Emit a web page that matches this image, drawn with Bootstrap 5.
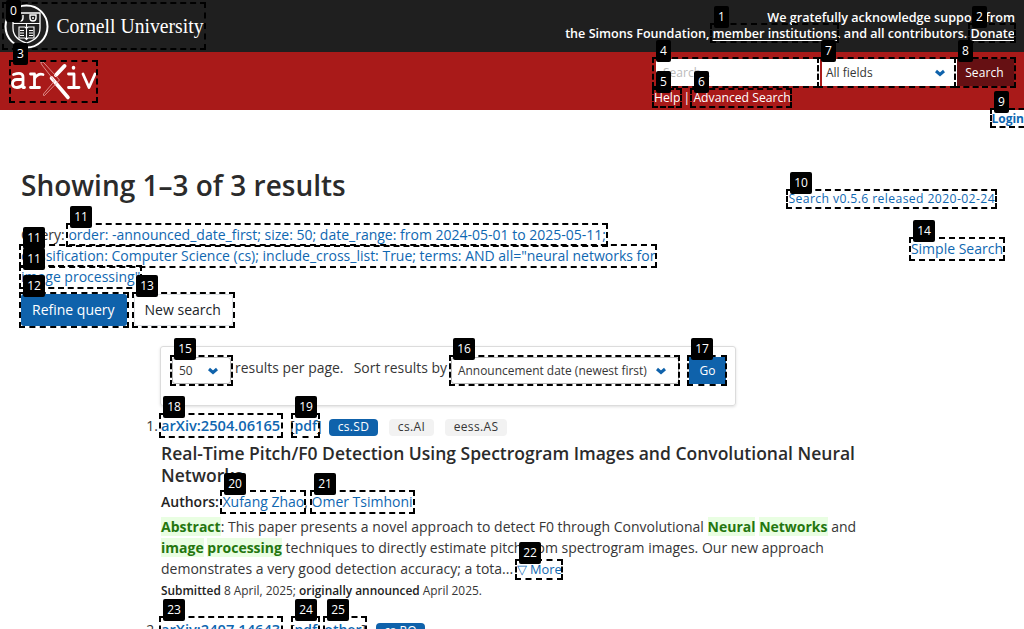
<!DOCTYPE html>
<html lang="en">
<head>
<meta charset="utf-8">
<meta name="viewport" content="width=device-width, initial-scale=1">
<title>Search | arXiv e-print repository</title>
<link href="https://cdn.jsdelivr.net/npm/bootstrap@5.3.0/dist/css/bootstrap.min.css" rel="stylesheet">
<style>
html,body{height:629px;overflow:hidden}
body{font:400 14px/21px "Open Sans",sans-serif;color:#363636;background:#fff;position:relative}
a{color:#0f67b1;text-decoration:none}
.top-bar{height:52px;background:#1f1f1f;color:#fff;font-weight:600;font-size:12.6px;line-height:16px;padding:2px 9px 0 3px}
.top-bar a{color:#fff;text-decoration:underline;text-underline-offset:2px}
.brand-bar{height:58px;background:#a91a19;padding:7px 10px 0 11px;color:#fff}
.brand-bar a{color:#fff}
.plain-input{width:164px;height:27px;background:#fff;color:#bbb;font-size:12px;line-height:27px;padding-left:7px;margin-right:2px}
.pick{height:27px;background:#fff;color:#363636;font-size:12px;line-height:27px;border:0;padding:0}
.pick-fields{width:135px;padding-left:4px}
.pick.lined{border:1px solid #b5b5b5;border-radius:3px;line-height:26px;font-size:11.95px;padding-left:6px}
.pick-count{width:59px}
.pick-order{width:228px}
.chev{width:14px;height:10px;margin-right:10px;fill:none;stroke:#0f62ab;stroke-width:3}
.dark-btn,.dark-btn:hover{width:57px;height:27px;background:#661013;color:#fff;font-size:12px;letter-spacing:.1px;line-height:26px;border-radius:0;border:0;padding:0 2px 0 0}
.go-btn{width:37px;height:27px;font-size:12px;line-height:26px;margin-left:10px}
.links-small{font-size:12.2px;line-height:22px;padding-top:1px;margin-left:-2px}
.login-row{height:18px;line-height:18px;font-size:12px;font-weight:700}
.results-head{height:160px;padding:41px 21px 0}
.version{font-size:12.2px;letter-spacing:.39px;padding:19px 8px 0 0}
.simple{padding-top:29px}
h1{font-size:28px;line-height:33px;font-weight:600;color:#2b2b2b;margin:0}
.query-text{width:640px;height:63px;margin-top:22px}
.query-actions{padding:6px 0 0 21px;gap:7px}
.btn-q{height:32px;font-size:14px;line-height:30px;border-radius:3px;padding:0 11px 0 10px}
.blue{background:#0f62ab;color:#fff}
.sort-box{width:576px;height:60px;margin:20px 0 0 160px;border:1px solid #dcdcdc;border-radius:3px;box-shadow:0 1px 3px rgba(0,0,0,.13);padding:10px 9px 0 11px}
.sort-label{font-size:13.95px}
.result{margin:0 0 0 161px;width:715px;position:relative;padding-top:9px}
.result + .result{padding-top:18px}
.result-no{position:absolute;left:-40px;width:37px;text-align:right}
.paper-id{font-weight:600;font-size:14.65px;width:129px}
.formats{width:39px}
.formats.two{width:86px}
.formats a{font-weight:600}
.tagx{height:17px;line-height:16px;border-radius:4px;font-size:12px;letter-spacing:.35px;background:#f2f2f2;text-align:center;display:inline-block;margin:4px 11px 0 0;width:45px}
.tagx.wide{width:62px}
.tagx.blue{background:#0f62ab;color:#fff;width:49px}
.paper-title{font-size:17.5px;line-height:22px;font-weight:600;color:#2b2b2b;margin:6px 0 5px}
b{font-weight:600;color:#222}
.hit{font-weight:700;color:#24760f;background:#e9fee2}
.fine{font-size:11.9px}
.more{font-size:12.8px}
.pins{position:absolute;inset:0;overflow:hidden;pointer-events:none}
.pin-box{position:absolute;border:2px dashed #000}
.pin-tag{position:absolute;height:22px;line-height:21px;background:#000;color:#fff;font-size:12px;text-align:center;border-radius:2px}
</style>
</head>
<body>
<header>
 <div class="top-bar d-flex justify-content-between">
  <svg width="204" height="48" viewBox="0 0 204 48" aria-label="Cornell University">
   <g fill="none" stroke="#fff">
    <circle cx="23.5" cy="24.500" r="21" stroke-width="2"/>
    <path d="M10 11H37V26Q37 37 23.500 41Q10 37 10 26Z" stroke-width="1.3"/>
    <path d="M10 21.500H37M23.500 22V26M16 25h6l1.500 1.500 1.500-1.500h6v11h-6l-1.500 1.500-1.500-1.500h-6zM23.500 26v12M17 28.500h4M17 31h4M17 33.500h4M26 28.500h4M26 31h4M26 33.500h4" stroke-width="1.1"/>
    <path d="M14 13v3q0 3 3 3t3-3v-3M27 13v3q0 3 3 3t3-3v-3zM29 16h2" stroke-width="1.4"/>
   </g>
   <text x="53.500" y="31" fill="#fff" font-family="Liberation Serif,serif" font-size="21" font-weight="400" textLength="147" lengthAdjust="spacingAndGlyphs">Cornell University</text>
  </svg>
  <div class="text-end pt-2 text-nowrap">We gratefully acknowledge support from<br>the Simons Foundation, <a href="#">member institutions</a>. and all contributors. <a href="#">Donate</a></div>
 </div>
 <div class="brand-bar d-flex justify-content-between">
  <svg width="86" height="42" viewBox="0 0 86 42" fill="none" stroke="#fff" stroke-linecap="round" stroke-linejoin="round" aria-label="arXiv">
   <g stroke-width="2.800">
    <path d="M2.500 15.500Q12 12.500 12 18V28.500M12 20.500H6Q1.500 20.500 1.500 24.500T6 28.500Q10 28.500 12 25M12 28.500h1.500"/>
    <path d="M19.500 15h4V28.500M19.500 28.500h9M23.500 19.500Q27 14 32 15.500"/>
    <path d="M57.500 15H63V28.500M57.500 28.500H68M72 15L78 28.500L84 15"/>
    <path d="M62.500 8.500v.5" stroke-width="3.500"/>
   </g>
   <path d="M53.500 7L45 16" stroke-width="4"/><path d="M40.500 19L57 38.500" stroke-width="3.600"/>
   <path d="M30 3Q32 2 34 5L48.500 21L33.500 36.500Q32 37 32.500 35L43.500 22L31 6Q29.500 4 30 3Z" stroke="#e8a5a3" stroke-width=".8"/>
  </svg>
  <div>
   <div class="d-flex">
    <div class="plain-input">Search...</div>
    <div class="pick pick-fields d-flex align-items-center justify-content-between"><span>All fields</span><svg class="chev" viewBox="0 0 14 10"><path d="M3 3L7 6.500L11 3"/></svg></div>
    <button class="btn dark-btn ms-auto">Search</button>
   </div>
   <div class="links-small"><a href="#">Help</a> | <a href="#">Advanced Search</a></div>
  </div>
 </div>
</header>
<div class="login-row text-end"><a href="#">Login</a></div>
<main>
 <div class="results-head d-flex justify-content-between">
  <div>
   <h1>Showing 1–3 of 3 results</h1>
   <p class="query-text mb-0">Query: <a href="#">order: -announced_date_first; size: 50; date_range: from 2024-05-01 to 2025-05-11; classification: Computer Science (cs); include_cross_list: True; terms: AND all="neural networks for image processing"</a></p>
  </div>
  <div class="text-end text-nowrap">
   <div class="version"><a href="#">Search v0.5.6 released 2020-02-24</a></div>
   <div class="simple"><a href="#">Simple Search</a></div>
  </div>
 </div>
 <div class="query-actions d-flex">
  <a class="btn btn-q blue" href="#">Refine query</a>
  <a class="btn btn-q border text-dark" href="#">New search</a>
 </div>
 <div class="sort-box d-flex align-items-start text-nowrap">
  <div class="pick lined pick-count d-flex align-items-center justify-content-between"><span>50</span><svg class="chev" viewBox="0 0 14 10"><path d="M3 3L7 6.500L11 3"/></svg></div>
  <span class="sort-label ps-1">results per page.</span><span class="sort-label ms-auto me-1">Sort results by</span>
  <div class="pick lined pick-order d-flex align-items-center justify-content-between"><span>Announcement date (newest first)</span><svg class="chev" viewBox="0 0 14 10"><path d="M3 3L7 6.500L11 3"/></svg></div>
  <button class="btn blue go-btn p-0 rounded-0 border-0">Go</button>
 </div>
 <article class="result">
  <span class="result-no">1.</span>
  <div class="d-flex align-items-center"><a class="paper-id" href="#">arXiv:2504.06165</a><span class="formats">[<a href="#">pdf</a>]</span>
   <span class="tagx blue">cs.SD</span><span class="tagx">cs.AI</span><span class="tagx wide">eess.AS</span></div>
  <p class="paper-title">Real-Time Pitch/F0 Detection Using Spectrogram Images and Convolutional Neural Networks</p>
  <p class="mb-0"><b>Authors:</b> <a href="#">Xufang Zhao</a>, <a href="#">Omer Tsimhoni</a></p>
  <p class="mb-0 mt-1"><span class="hit">Abstract</span>: This paper presents a novel approach to detect F0 through Convolutional <span class="hit">Neural</span> <span class="hit">Networks</span> and<br><span class="hit">image</span> <span class="hit">processing</span> techniques to directly estimate pitch from spectrogram images. Our new approach<br>demonstrates a very good detection accuracy; a tota... <a class="more" href="#">▽ More</a></p>
  <p class="fine mb-0"><b>Submitted</b> 8 April, 2025; <b>originally announced</b> April 2025.</p>
 </article>
 <article class="result">
  <span class="result-no">2.</span>
  <div class="d-flex align-items-center"><a class="paper-id" href="#">arXiv:2407.14643</a><span class="formats two">[<a href="#">pdf</a>, <a href="#">other</a>]</span>
   <span class="tagx blue">cs.RO</span></div>
 </article>
</main>
<div class="pins" id="pins"></div>
<script src="https://cdn.jsdelivr.net/npm/bootstrap@5.3.0/dist/js/bootstrap.bundle.min.js"></script>
<script>
// label, left, top, right, bottom of each interactive element
const boxes=[[0,2,2,206,50],[1,710,23,839,43],[2,968,23,1016,43],[3,9,60,98,103],[4,652,57,819,88],[7,817,57,956,88],[8,954,57,1016,88],[5,652,88,682,108],[6,690,88,792,108],[9,990,108,1034,128],[10,786,189,997,209],[14,909,237,1005,261],[11,66,223,608,247],[11,19,244,657,268],[11,19,265,142,289],[12,19,292,129,328],[13,132,292,235,328],[15,170,355,233,386],[16,449,355,680,386],[17,687,355,727,386],[18,159,413,283,438],[19,291,413,320,438],[20,220,490,306,514],[21,310,490,415,514],[22,515,559,563,580],[23,159,616,283,641],[24,291,616,320,641],[25,323,616,367,641]];
const layer=document.getElementById('pins');
for(const [n,l,t,r,b] of boxes){
 const e=document.createElement('div');e.className='pin-box';
 e.style.cssText=`left:${l}px;top:${t}px;width:${r-l}px;height:${b-t}px`;layer.append(e);
}
for(const [n,l,t] of boxes){
 const e=document.createElement('div');e.className='pin-tag';e.textContent=n;
 e.style.cssText=`left:${l+4}px;top:${Math.max(0,t-17)}px;width:${n>9?22:15}px`;layer.append(e);
}
</script>
</body>
</html>
